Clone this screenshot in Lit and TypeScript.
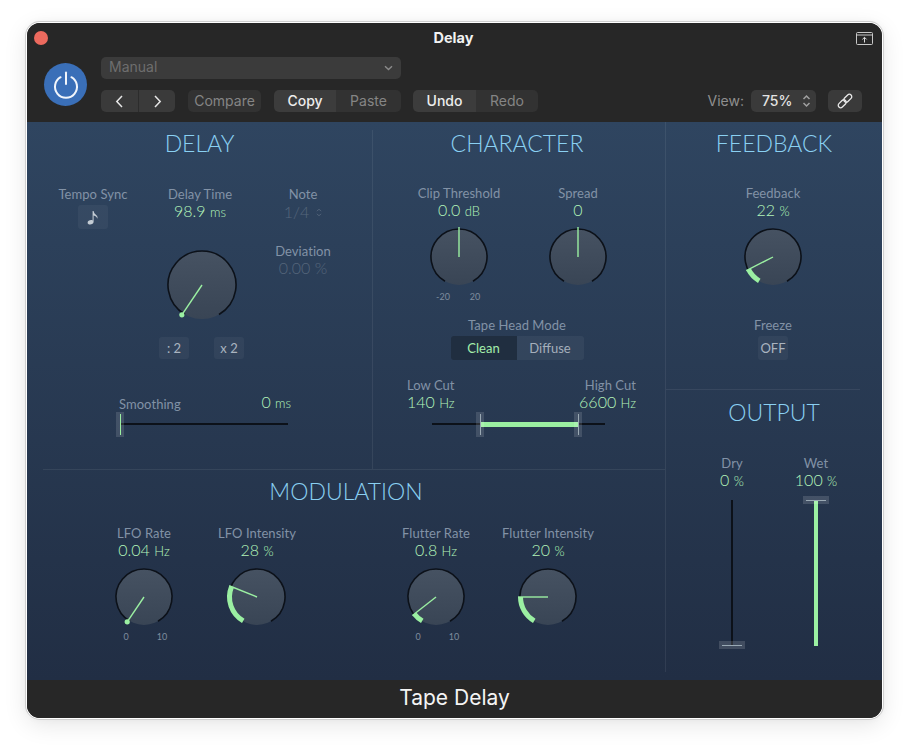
import { LitElement, html, css, svg, nothing } from "lit";
import { customElement, property } from "lit/decorators.js";

@customElement("dial-knob")
class DialKnob extends LitElement {
  @property({ type: Number }) r = 28;
  @property({ type: Number }) angle = 0;
  @property({ type: Boolean }) arc = false;
  @property({ type: Boolean }) dot = false;
  static styles = css`
    :host { display: block; line-height: 0; }
    svg { display: block; overflow: visible; }
    .ring { fill: none; stroke: #0c1119; stroke-width: 1.6; }
    .pointer { stroke: #9bf0a2; stroke-width: 1.4; }
    .level { fill: none; stroke: #9bf0a2; stroke-width: 5; }
    .tip { fill: #9bf0a2; }
  `;
  private pt(radius: number, deg: number, c: number) {
    const a = (deg * Math.PI) / 180;
    return [c + radius * Math.sin(a), c - radius * Math.cos(a)];
  }
  private arcPath(radius: number, from: number, to: number, c: number) {
    const [x1, y1] = this.pt(radius, from, c);
    const [x2, y2] = this.pt(radius, to, c);
    const large = to - from > 180 ? 1 : 0;
    return `M${x1} ${y1}A${radius} ${radius} 0 ${large} 1 ${x2} ${y2}`;
  }
  render() {
    const size = this.r * 2 + 8;
    const c = size / 2;
    const [tx, ty] = this.pt(this.r + 2, this.angle, c);
    return html`<svg width=${size} height=${size} viewBox="0 0 ${size} ${size}">
      <defs>
        <linearGradient id="face" x1="0" y1="0" x2="0" y2="1">
          <stop offset="0" stop-color="#465262"></stop>
          <stop offset="1" stop-color="#394555"></stop>
        </linearGradient>
      </defs>
      <circle cx=${c} cy=${c} r=${this.r} fill="url(#face)"></circle>
      <path class="ring" d=${this.arcPath(this.r, -150, 150, c)}></path>
      ${this.arc ? svg`<path class="level" d=${this.arcPath(this.r - 0.5, -150, this.angle, c)}></path>` : nothing}
      <line class="pointer" x1=${c} y1=${c} x2=${tx} y2=${ty}></line>
      ${this.dot ? svg`<circle class="tip" cx=${tx} cy=${ty} r="2.6"></circle>` : nothing}
    </svg>`;
  }
}

@customElement("app-root")
class AppRoot extends LitElement {
  static styles = css`
    :host {
      display: block;
      position: relative;
      width: 909px;
      height: 750px;
      background: #fff;
      overflow: hidden;
      font-family: "Lato", "Noto Sans", sans-serif;
    }
    .window {
      position: relative;
      margin: 23px 0 0 27px;
      width: 855px;
      height: 695px;
      border-radius: 13px;
      overflow: hidden;
      display: flex;
      flex-direction: column;
      background: #272727;
    }
    .shadow {
      position: absolute;
      left: 27px; top: 23px;
      width: 855px; height: 695px;
      border-radius: 13px;
      box-shadow: 0 0 0 1px #fff, 0 0 0 2px #cfcfcf, 0 6px 24px rgba(0, 0, 0, 0.11), 0 0 8px rgba(0, 0, 0, 0.05);
    }
    /* header */
    .header {
      height: 99px;
      flex: none;
      background: #272727;
      font-family: "Inter", "Liberation Sans", sans-serif;
      display: flex;
      flex-direction: column;
    }
    .titlebar {
      height: 34px;
      display: grid;
      grid-template-columns: 1fr auto 1fr;
      align-items: center;
      padding: 0 9px 4px 7px;
      box-sizing: border-box;
    }
    .close { width: 14px; height: 14px; border-radius: 50%; background: #ec6a5e; }
    .title { color: #f2f2f2; font-size: 14.5px; font-weight: 700; line-height: 18px; }
    .share { justify-self: end; display: block; }
    .toolbar { display: flex; align-items: center; padding: 0 20px 0 17px; gap: 14px; }
    .power {
      width: 43px; height: 43px; border-radius: 50%;
      background: #3a6fb8;
      display: flex; align-items: center; justify-content: center;
      flex: none;
    }
    .stack { flex: 1; display: flex; flex-direction: column; gap: 11px; }
    .preset {
      width: 300px; height: 22px; border-radius: 5px; background: #3b3b3b;
      display: flex; align-items: center; justify-content: space-between;
      padding: 0 8px; box-sizing: border-box;
      color: #6e6e6e; font-size: 14px;
    }
    .preset span { padding-bottom: 3px; }
    .btnrow { display: flex; align-items: center; height: 22px; }
    .group { display: flex; height: 22px; border-radius: 5px; overflow: hidden; }
    .gbtn {
      display: flex; align-items: center; justify-content: center;
      box-sizing: border-box; padding-bottom: 2px;
      font-size: 14px; background: #323232; color: #858585;
    }
    .gbtn.on { background: #3c3c3c; color: #ececec; font-weight: 500; }
    .nav { width: 37px; background: #3a3a3a; padding-bottom: 0; }
    .nav + .nav { border-left: 1px solid #2c2c2c; }
    .full { width: 100%; }
    .w62 { width: 62px; } .w63 { width: 63px; } .w65 { width: 65px; }
    .compare { width: 73px; margin: 0 13px; }
    .undo { margin-left: 12px; }
    .viewlabel { margin-left: auto; color: #8f8f8f; font-size: 14px; margin-right: 7px; padding-bottom: 2px; }
    .zoomsel {
      width: 65px; height: 22px; border-radius: 5px; background: #3a3a3a; color: #e4e4e4;
      font-size: 14px; font-weight: 500; display: flex; align-items: center; justify-content: space-between;
      padding: 0 5px 0 11px; box-sizing: border-box;
    }
    .zoomsel span { padding-bottom: 2px; }
    .linkbtn {
      width: 34px; height: 22px; border-radius: 5px; background: #3a3a3a; margin-left: 12px;
      display: flex; align-items: center; justify-content: center;
    }
    /* panel */
    .panel {
      flex: 1; min-height: 0;
      background: linear-gradient(#2f4560, #212e44);
      display: grid;
      grid-template-columns: 638px 217px;
    }
    .left { display: flex; flex-direction: column; }
    .top { height: 347px; display: grid; grid-template-columns: 346px 292px; }
    .delay { border-right: 1px solid rgba(255,255,255,0.07); box-sizing: border-box; margin-top: 8px; }
    .character { padding-right: 4px; box-sizing: border-box; padding-top: 8px; }
    .hr { height: 1px; margin-left: 16px; background: rgba(255,255,255,0.07); }
    h2 {
      margin: 0; height: 28px; line-height: 26px; text-align: center;
      font-size: 23px; font-weight: 300; color: #8ad0f2;
    }
    .param { display: flex; flex-direction: column; align-items: center; }
    .label { height: 16px; line-height: 16px; font-size: 13px; color: #8292a6; letter-spacing: 0.05px; white-space: nowrap; }
    .value { height: 20px; line-height: 18px; font-size: 16px; font-weight: 300; color: #b4f5ba; white-space: nowrap; }
    .value small { font-size: 13px; font-weight: 300; }
    .dim { color: #55667b; display: flex; align-items: center; gap: 7px; }
    .ticks {
      display: flex; justify-content: center; gap: 12px; margin-top: 2px;
      height: 12px; line-height: 12px; font-size: 9px; color: #7f8d9e;
    }
    .ticks.wide { gap: 16px; }
    .ticks span { width: 20px; text-align: center; }
    .chip {
      display: flex; align-items: center; justify-content: center;
      height: 22px; width: 30px; border-radius: 3px;
      background: rgba(255,255,255,0.045); color: #aab4c0; font-size: 13px;
    }
    /* delay */
    .delaygrid {
      display: grid; grid-template-columns: 110px 104px 102px; padding-left: 11px; margin-top: 28px;
    }
    .sync { height: 24px; margin-top: 3px; }
    .bigknob { margin: 25px 0 0 4px; }
    .mult { display: flex; gap: 25px; margin: 14px 0 0 3px; }
    .devlabel { margin-top: 21px; }
    .devvalue { margin-top: -1px; }
    .smooth { margin: 35px 0 0 92px; width: 172px; display: flex; justify-content: space-between; height: 18px; align-items: center; }
    .smooth .label { margin-top: 2px; }
    .hslider { position: relative; height: 25px; width: 168px; margin-left: 93px; }
    .track { position: absolute; left: 0; right: 0; top: 11px; height: 2px; background: #0c1119; }
    .fill { position: absolute; left: 48px; width: 98px; top: 10px; height: 4.5px; background: #9bf0a2; }
    .thumb {
      position: absolute; top: 0; width: 8px; height: 25px; margin-left: -4px;
      background: rgba(255,255,255,0.13);
    }
    .thumb::after { content: ""; position: absolute; left: 3.5px; top: 2px; bottom: 2px; width: 1px; background: #9aa9b4; }
    .thumb.green::after { background: #9bf0a2; }
    .at0 { left: 0; } .at48 { left: 48px; } .at146 { left: 146px; }
    /* character */
    .charknobs {
      display: grid; grid-template-columns: 100px 100px; column-gap: 19px; padding-left: 36px; margin-top: 27px; align-items: start;
    }
    .knob { margin-top: 4px; }
    .tape { margin-top: 14px; }
    .seg { display: flex; margin-top: 3px; height: 24px; width: 133px; border-radius: 3px; overflow: hidden; font-size: 13px; }
    .seg div { display: flex; align-items: center; justify-content: center; }
    .clean { width: 66px; background: #202e40; color: #a4eeab; }
    .diffuse { flex: 1; background: rgba(255,255,255,0.05); color: #a5afbb; }
    .cuts { display: flex; justify-content: space-between; width: 229px; margin: 17px 0 0 34px; height: 35px; }
    .cuts .param.l { align-items: flex-start; }
    .cuts .param.r { align-items: flex-end; }
    .cutslider { width: 173px; margin-left: 59px; }
    /* modulation */
    .modulation { padding-top: 8px; }
    .modrow { display: flex; padding-left: 67px; margin-top: 19px; }
    .modrow .param { width: 100px; }
    .ml13 { margin-left: 13px; } .ml79 { margin-left: 79px; } .ml12 { margin-left: 12px; }
    /* right */
    .right { border-left: 1px solid rgba(255,255,255,0.07); margin-bottom: 8px; display: flex; flex-direction: column; }
    .feedback { height: 268px; padding-top: 8px; box-sizing: border-box; margin-right: 22px; border-bottom: 1px solid rgba(255,255,255,0.07); }
    .feedback h2 { margin-right: -22px; }
    .feedback .param { margin: 27px -22px 0 -2px; }
    .freezelabel { margin-top: 28px; }
    .off { height: 24px; margin-top: 3px; }
    .output { padding-top: 9px; }
    .faders { display: grid; grid-template-columns: 80px 80px; gap: 4px; padding-left: 26px; margin-top: 28px; }
    .vslider { position: relative; width: 26px; height: 153px; margin-top: 5px; }
    .vtrack { position: absolute; top: 4px; bottom: 3px; left: 12px; width: 2px; background: #0c1119; }
    .vfill { position: absolute; top: 4px; bottom: 3px; left: 11px; width: 4px; background: #9bf0a2; }
    .vthumb { position: absolute; left: 0; width: 26px; height: 8px; background: rgba(255,255,255,0.14); }
    .vthumb::after { content: ""; position: absolute; left: 3px; right: 3px; top: 3.5px; height: 1px; background: #9aa9b4; }
    .vthumb.high { top: 0; }
    .vthumb.low { bottom: 0; }
    .footer {
      height: 38px; flex: none; background: #272727; color: #f4f4f4;
      display: flex; align-items: center; justify-content: center;
      padding-bottom: 4px; box-sizing: border-box;
      font-family: "Inter", "Liberation Sans", sans-serif; font-size: 21px;
    }
  `;

  private stepper(color: string) {
    return html`<svg width="9" height="14" viewBox="0 0 9 14" fill="none" stroke=${color} stroke-width="1.5">
      <path d="M1.5 5 4.500 2 7.500 5M1.500 9 4.500 12 7.500 9"></path></svg>`;
  }

  private knob(label: string, val: string, unit: string, angle: number, opts: { arc?: boolean; dot?: boolean; cls?: string; ticks?: boolean } = {}) {
    return html`<div class="param ${opts.cls ?? ""}">
      <div class="label">${label}</div>
      <div class="value">${val}${unit ? html` <small>${unit}</small>` : nothing}</div>
      <dial-knob class="knob" .r=${28} .angle=${angle} ?arc=${opts.arc} ?dot=${opts.dot}></dial-knob>
      ${opts.ticks ? html`<div class="ticks wide"><span>0</span><span>10</span></div>` : nothing}
    </div>`;
  }

  render() {
    return html`
      <div class="shadow"></div>
      <div class="window">
        <div class="header">
          <div class="titlebar">
            <div class="close"></div>
            <div class="title">Delay</div>
            <svg class="share" width="17" height="13" viewBox="0 0 17 13" fill="none" stroke="#c8c8c8" stroke-width="1">
              <rect x="0.5" y="0.5" width="16" height="12" rx="1"></rect>
              <path d="M1 3h15"></path>
              <path d="M8.5 10.5V5.5M6.4 7.400 8.500 5.300 10.600 7.400" stroke="#e0e0e0"></path>
            </svg>
          </div>
          <div class="toolbar">
            <div class="power">
              <svg width="26" height="28" viewBox="0 0 26 28" fill="none" stroke="#f1f5fb" stroke-width="2" stroke-linecap="round">
                <path d="M13 1.500V13"></path>
                <path d="M7.600 6.200A11 11 0 1 0 18.400 6.200"></path>
              </svg>
            </div>
            <div class="stack">
              <div class="preset">
                <span>Manual</span>
                <svg width="9" height="6" viewBox="0 0 9 6" fill="none" stroke="#8a8a8a" stroke-width="1.4"><path d="M1 1.200 4.500 4.600 8 1.200"></path></svg>
              </div>
              <div class="btnrow">
                <div class="group">
                  <div class="gbtn nav"><svg width="9" height="13" viewBox="0 0 9 13" fill="none" stroke="#e6e6e6" stroke-width="1.5"><path d="M7 1 1.800 6.500 7 12"></path></svg></div>
                  <div class="gbtn nav"><svg width="9" height="13" viewBox="0 0 9 13" fill="none" stroke="#e6e6e6" stroke-width="1.5"><path d="M2 1 7.200 6.500 2 12"></path></svg></div>
                </div>
                <div class="group compare"><div class="gbtn full">Compare</div></div>
                <div class="group">
                  <div class="gbtn on w62">Copy</div>
                  <div class="gbtn w65">Paste</div>
                </div>
                <div class="group undo">
                  <div class="gbtn on w63">Undo</div>
                  <div class="gbtn w62">Redo</div>
                </div>
                <div class="viewlabel">View:</div>
                <div class="zoomsel"><span>75%</span>${this.stepper("#a0a0a0")}</div>
                <div class="linkbtn">
                  <svg width="16" height="16" viewBox="0 0 16 16" fill="none" stroke="#e8e8e8" stroke-width="1.3">
                    <rect x="-4.600" y="-2.400" width="9.200" height="4.800" rx="2.400" transform="translate(5.200 10.800) rotate(-45)"></rect>
                    <rect x="-4.600" y="-2.400" width="9.200" height="4.800" rx="2.400" transform="translate(10.800 5.200) rotate(-45)"></rect>
                  </svg>
                </div>
              </div>
            </div>
          </div>
        </div>

        <div class="panel">
          <div class="left">
            <div class="top">
              <section class="delay">
                <h2>DELAY</h2>
                <div class="delaygrid">
                  <div class="param">
                    <div class="label">Tempo Sync</div>
                    <div class="chip sync">
                      <svg width="14" height="15" viewBox="0 0 14 15"><path fill="#c4ccd4" d="M6.600 1h1c.3 2 1.400 3 2.800 4.200 1 .9 1.500 2 .9 3.600-.2-1.500-1.500-2.700-3.700-3.300v6.200c0 1.700-1.700 2.800-3.500 2.800-1.500 0-2.500-.7-2.500-1.800 0-1.500 1.700-2.600 3.500-2.600.6 0 1.100.1 1.500.3z"></path></svg>
                    </div>
                  </div>
                  <div class="param">
                    <div class="label">Delay Time</div>
                    <div class="value">98.9 <small>ms</small></div>
                    <dial-knob class="bigknob" .r=${34} .angle=${-146} dot></dial-knob>
                    <div class="mult"><div class="chip">: 2</div><div class="chip">x 2</div></div>
                  </div>
                  <div class="param">
                    <div class="label">Note</div>
                    <div class="value dim">1/4
                      <svg width="6" height="9" viewBox="0 0 6 9" fill="none" stroke="#55667b" stroke-width="1"><path d="M1 3.200 3 1.200 5 3.200M1 5.800 3 7.800 5 5.800"></path></svg>
                    </div>
                    <div class="label devlabel">Deviation</div>
                    <div class="value dim devvalue">0.00 %</div>
                  </div>
                </div>
                <div class="smooth">
                  <div class="label">Smoothing</div>
                  <div class="value">0 <small>ms</small></div>
                </div>
                <div class="hslider">
                  <div class="track"></div>
                  <div class="thumb green at0"></div>
                </div>
              </section>

              <section class="character">
                <h2>CHARACTER</h2>
                <div class="charknobs">
                  <div class="param">
                    <div class="label">Clip Threshold</div>
                    <div class="value">0.0 <small>dB</small></div>
                    <dial-knob class="knob" .r=${28} .angle=${0}></dial-knob>
                    <div class="ticks"><span>-20</span><span>20</span></div>
                  </div>
                  <div class="param">
                    <div class="label">Spread</div>
                    <div class="value">0</div>
                    <dial-knob class="knob" .r=${28} .angle=${0}></dial-knob>
                  </div>
                </div>
                <div class="param tape">
                  <div class="label">Tape Head Mode</div>
                  <div class="seg"><div class="clean">Clean</div><div class="diffuse">Diffuse</div></div>
                </div>
                <div class="cuts">
                  <div class="param l"><div class="label">Low Cut</div><div class="value">140 <small>Hz</small></div></div>
                  <div class="param r"><div class="label">High Cut</div><div class="value">6600 <small>Hz</small></div></div>
                </div>
                <div class="hslider cutslider">
                  <div class="track"></div>
                  <div class="fill"></div>
                  <div class="thumb at48"></div>
                  <div class="thumb at146"></div>
                </div>
              </section>
            </div>
            <div class="hr"></div>
            <section class="modulation">
              <h2>MODULATION</h2>
              <div class="modrow">
                ${this.knob("LFO Rate", "0.04", "Hz", -146, { dot: true, ticks: true })}
                ${this.knob("LFO Intensity", "28", "%", -68, { arc: true, cls: "ml13" })}
                ${this.knob("Flutter Rate", "0.8", "Hz", -128, { arc: true, cls: "ml79", ticks: true })}
                ${this.knob("Flutter Intensity", "20", "%", -90, { arc: true, cls: "ml12" })}
              </div>
            </section>
          </div>

          <div class="right">
            <section class="feedback">
              <h2>FEEDBACK</h2>
              <div class="param">
                <div class="label">Feedback</div>
                <div class="value">22 <small>%</small></div>
                <dial-knob class="knob" .r=${28} .angle=${-117} arc></dial-knob>
                <div class="label freezelabel">Freeze</div>
                <div class="chip off">OFF</div>
              </div>
            </section>
            <section class="output">
              <h2>OUTPUT</h2>
              <div class="faders">
                <div class="param">
                  <div class="label">Dry</div>
                  <div class="value">0 <small>%</small></div>
                  <div class="vslider"><div class="vtrack"></div><div class="vthumb low"></div></div>
                </div>
                <div class="param">
                  <div class="label">Wet</div>
                  <div class="value">100 <small>%</small></div>
                  <div class="vslider"><div class="vfill"></div><div class="vthumb high"></div></div>
                </div>
              </div>
            </section>
          </div>
        </div>

        <div class="footer">Tape Delay</div>
      </div>
    `;
  }
}
